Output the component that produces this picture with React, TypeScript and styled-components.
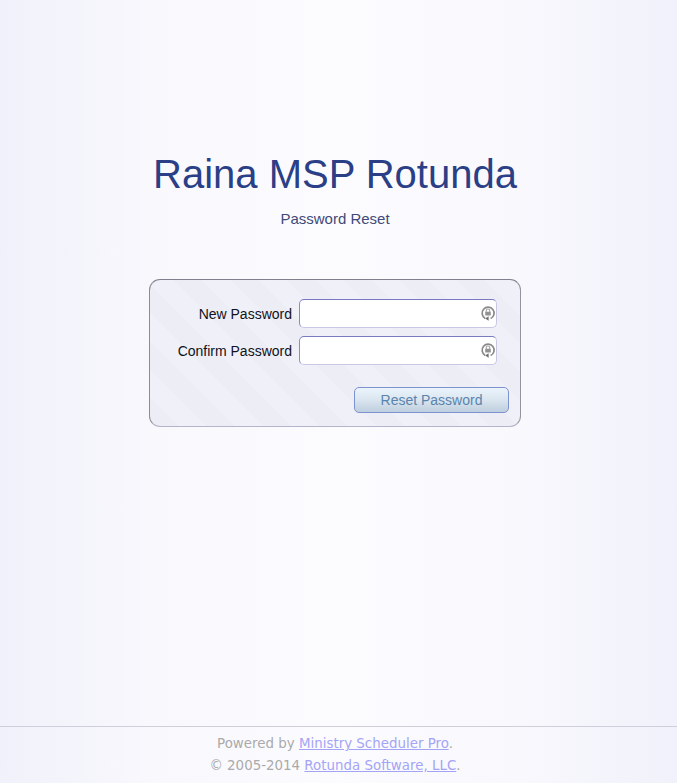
import React from 'react'
import styled, { createGlobalStyle } from 'styled-components'

const GlobalStyle = createGlobalStyle`
  html, body {
    margin: 0;
    padding: 0;
    height: 100%;
  }
  body {
    font-family: "Liberation Sans", Arial, sans-serif;
    background: #fbfbff;
  }
`

const ResetIcon: React.FC = () => (
  <IconSvg viewBox='0 0 16 16' width={16} height={16}>
    <path d='M5.2 13.4A6 6 0 1 1 10.6 13.6' fill='none' stroke='#8a8a8a' strokeWidth='1.7' />
    <path d='M8.6 11.2v4.6L5.2 13.5z' fill='#707070' />
    <path d='M6.2 7V5.8a1.8 1.8 0 0 1 3.6 0V7' fill='none' stroke='#a4a4a4' strokeWidth='1.1' />
    <rect x='5.2' y='6.8' width='5.6' height='3.8' rx='0.6' fill='#929292' />
  </IconSvg>
)

const PasswordField: React.FC<{ label: string }> = ({ label }) => (
  <Row>
    <Label>{label}</Label>
    <InputWrap>
      <Input type='password' />
      <ResetIcon />
    </InputWrap>
  </Row>
)

const App: React.FC = () => (
  <Page>
    <GlobalStyle />
    <Main>
      <Title>Raina MSP Rotunda</Title>
      <Subtitle>Password Reset</Subtitle>
      <Panel>
        <PasswordField label='New Password' />
        <PasswordField label='Confirm Password' />
        <Actions>
          <ResetButton type='button'>Reset Password</ResetButton>
        </Actions>
      </Panel>
    </Main>
    <Footer>
      <div>Powered by <FooterLink href='#'>Ministry Scheduler Pro</FooterLink>.</div>
      <div>© 2005-2014 <FooterLink href='#'>Rotunda Software, LLC</FooterLink>.</div>
    </Footer>
  </Page>
)

const Page = styled.div`
  display: flex;
  flex-direction: column;
  min-height: 783px;
  box-sizing: border-box;
  background:
    linear-gradient(90deg, #f0f1fa 0%, #f8f8fd 22%, #fcfcff 50%, #f8f8fd 78%, #f0f1fa 100%);
`

const Main = styled.main`
  flex: 1;
  display: flex;
  flex-direction: column;
  align-items: center;
  padding-top: 151px;
  padding-right: 7px;
`

const Title = styled.h1`
  margin: 0;
  font-size: 40px;
  line-height: 46px;
  font-weight: normal;
  color: #2a3f86;
`

const Subtitle = styled.div`
  margin-top: 13px;
  font-size: 15px;
  line-height: 18px;
  color: #3f4a78;
`

const Panel = styled.form`
  box-sizing: border-box;
  width: 372px;
  height: 148px;
  margin-top: 51px;
  padding: 19px 11px 13px 0;
  border: 1px solid #b0b0c4;
  border-top-color: #7f7f8e;
  border-left-color: #8c8c98;
  border-right-color: #94949e;
  border-bottom-color: #b4b4ca;
  border-radius: 11px;
  background: repeating-linear-gradient(
    45deg,
    #edeef5 0,
    #edeef5 20px,
    #f0f1f8 20px,
    #f0f1f8 40px
  );
`

const Row = styled.div`
  display: flex;
  align-items: center;
  justify-content: flex-end;
  gap: 7px;
  height: 29px;
  margin-bottom: 8px;
  padding-right: 12px;
`

const Label = styled.label`
  font-size: 14px;
  color: #111122;
`

const InputWrap = styled.div`
  position: relative;
  width: 198px;
  height: 29px;
`

const Input = styled.input`
  box-sizing: border-box;
  display: block;
  width: 100%;
  height: 100%;
  padding: 0 24px 0 6px;
  background: #fff;
  border: 1px solid #c8c8e4;
  border-top-color: #7a7ac0;
  border-left-color: #8a8ac8;
  border-radius: 5px;
  outline: none;
`

const IconSvg = styled.svg`
  position: absolute;
  top: 6px;
  right: 1px;
`

const Actions = styled.div`
  display: flex;
  justify-content: flex-end;
  margin-top: 22px;
`

const ResetButton = styled.button`
  box-sizing: border-box;
  width: 155px;
  height: 26px;
  padding: 0;
  font-family: "Liberation Sans", Arial, sans-serif;
  font-size: 14px;
  color: #5a84ad;
  border: 1px solid #7f92d0;
  border-radius: 5px;
  background: linear-gradient(180deg, #ebf4fb 0%, #d9e5ef 50%, #bfcfde 100%);
`

const Footer = styled.footer`
  box-sizing: border-box;
  height: 57px;
  padding: 6px 7px 0 0;
  border-top: 1px solid #cfcfdc;
  text-align: center;
  font-family: "DejaVu Sans", Verdana, sans-serif;
  font-size: 13.4px;
  line-height: 22px;
  color: #aaaaaa;
`

const FooterLink = styled.a`
  color: #a4a4f6;
`

export default App
